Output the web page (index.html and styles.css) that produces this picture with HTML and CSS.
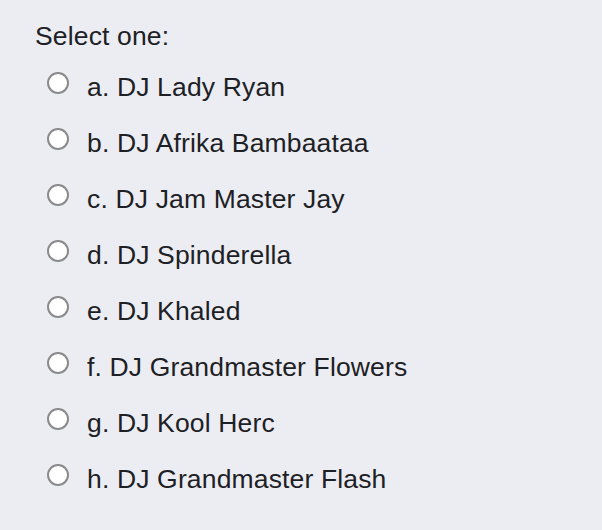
FILE: index.html
```html
<!DOCTYPE html>
<html>
<head>
<meta charset="utf-8">
<link rel="stylesheet" href="styles.css">
</head>
<body>
<div class="question">
  <div class="prompt">Select one:</div>
  <div class="answers">
    <label class="option"><span class="radio"></span><span class="text">a. DJ Lady Ryan</span></label>
    <label class="option"><span class="radio"></span><span class="text">b. DJ Afrika Bambaataa</span></label>
    <label class="option"><span class="radio"></span><span class="text">c. DJ Jam Master Jay</span></label>
    <label class="option"><span class="radio"></span><span class="text">d. DJ Spinderella</span></label>
    <label class="option"><span class="radio"></span><span class="text">e. DJ Khaled</span></label>
    <label class="option"><span class="radio"></span><span class="text">f. DJ Grandmaster Flowers</span></label>
    <label class="option"><span class="radio"></span><span class="text">g. DJ Kool Herc</span></label>
    <label class="option"><span class="radio"></span><span class="text">h. DJ Grandmaster Flash</span></label>
  </div>
</div>
</body>
</html>
```
FILE: styles.css
```css
html, body {
  margin: 0;
  padding: 0;
  background: #ecedf2;
}
body {
  width: 602px;
  height: 530px;
  overflow: hidden;
  font-family: "Liberation Sans", Arial, sans-serif;
  font-size: 26.5px;
  letter-spacing: 0.15px;
  color: #1d2125;
}
.question {
  padding: 21px 0 0 35px;
}
.prompt {
  line-height: 30px;
}
.answers {
  margin-top: 8px;
  display: flex;
  flex-direction: column;
}
.option {
  height: 56px;
  display: flex;
  align-items: center;
  padding-left: 12px;
}
.radio {
  box-sizing: border-box;
  width: 22px;
  height: 22px;
  border: 2px solid #8a8a8a;
  border-radius: 50%;
  background: #fff;
  align-self: flex-start;
  margin-top: 13px;
  margin-right: 18px;
  flex: none;
}
.text {
  line-height: 30px;
}
```
